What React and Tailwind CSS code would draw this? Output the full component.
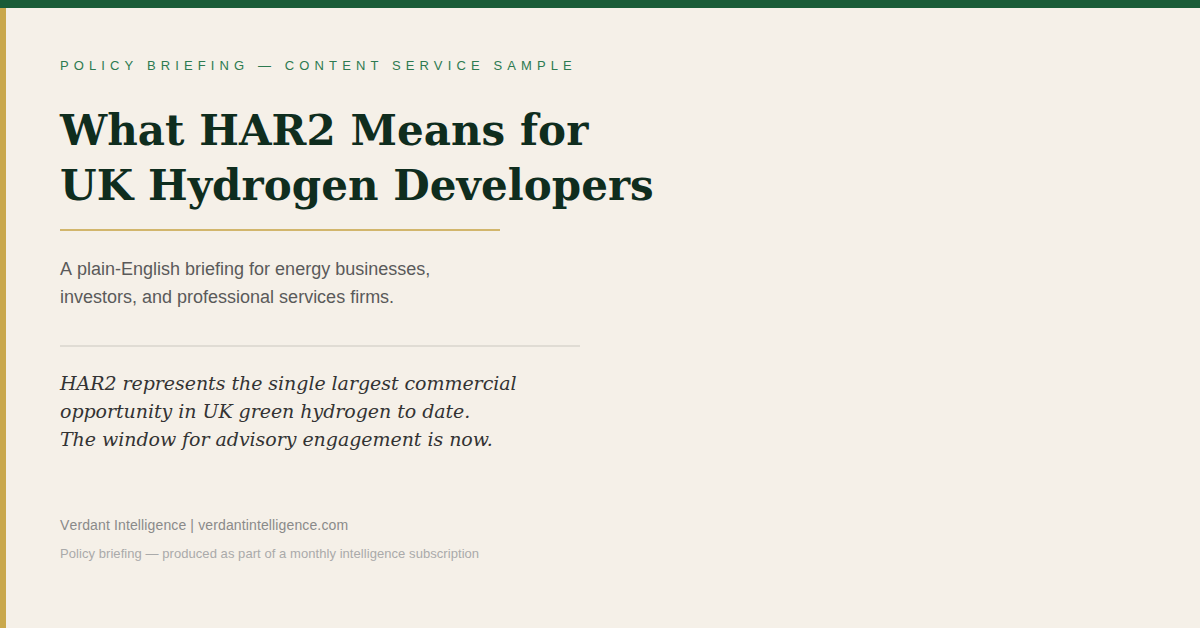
export default function App() {
  return (
    <div className="flex h-[628px] w-[1200px] flex-col overflow-hidden bg-[#f5f0e8]">
      <div className="h-2 bg-[#1a5c38]" />
      <div className="flex flex-1">
        <div className="w-1.5 bg-[#c9a84c]" />
        <div className="flex-1 pl-[54px] pt-[50px]">
          <p className="font-['Liberation_Sans',sans-serif] text-[13px] leading-[15px] tracking-[5.12px] text-[#2d7a50]">
            POLICY BRIEFING — CONTENT SERVICE SAMPLE
          </p>
          <h1 className="mt-[30px] font-['DejaVu_Serif',serif] text-[42px] leading-[55px] font-bold tracking-[0.05px] text-[#0f2d1e]">
            What HAR2 Means for
            <br />
            UK Hydrogen Developers
          </h1>
          <div className="mt-4 h-0.5 w-[440px] bg-[#c9a84c] opacity-80" />
          <p className="mt-6 font-['Liberation_Sans',sans-serif] text-lg leading-7 text-[#5a5a5a] [font-kerning:none]">
            A plain-English briefing for energy businesses,
            <br />
            investors, and professional services firms.
          </p>
          <div className="mt-[34px] h-0.5 w-[520px] bg-[#e0dcd4]" />
          <p className="mt-[22px] font-['DejaVu_Serif',serif] text-[19px] leading-7 tracking-[-0.05px] text-[#333333] italic">
            HAR2 represents the single largest commercial
            <br />
            opportunity in UK green hydrogen to date.
            <br />
            The window for advisory engagement is now.
          </p>
          <p className="mt-16 font-['Liberation_Sans',sans-serif] text-sm leading-4 tracking-[0.13px] text-[#8a8a8a] [font-kerning:none]">
            Verdant Intelligence | verdantintelligence.com
          </p>
          <p className="mt-[13px] font-['Liberation_Sans',sans-serif] text-[13px] leading-[15px] tracking-[0.06px] text-[#aaaaaa] [font-kerning:none]">
            Policy briefing — produced as part of a monthly intelligence subscription
          </p>
        </div>
      </div>
    </div>
  )
}
